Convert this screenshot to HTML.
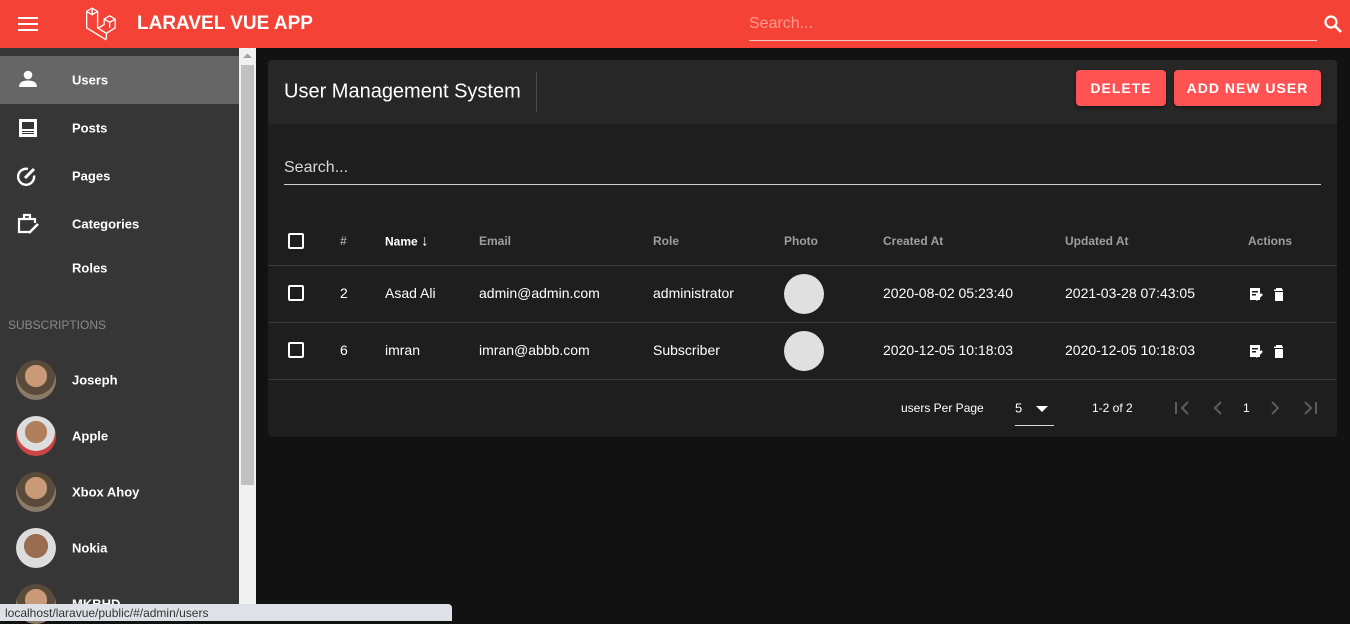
<!DOCTYPE html>
<html><head><meta charset="utf-8"><style>
*{margin:0;padding:0;box-sizing:border-box}
body{width:1350px;height:621px;overflow:hidden;background:#121212;font-family:"Liberation Sans",Arial,sans-serif;color:#fff;position:relative}
.abs{position:absolute}
.top{left:0;top:0;width:1350px;height:48px;background:#f44336}
.side{left:0;top:48px;width:239px;height:573px;background:#363636}
.sb{left:239px;top:48px;width:17px;height:573px;background:#f1f1f1}
.thumb{left:241px;top:65px;width:13px;height:420px;background:#c1c1c1}
.nav{position:absolute;left:72px;font-size:13px;font-weight:bold;transform:translateY(-50%)}
.av{position:absolute;left:16px;width:40px;height:40px;border-radius:50%;background:radial-gradient(circle at 50% 40%,#c89a78 0 35%,#5a4a3a 36% 60%,#8a7a66 61%)}
.card{left:268px;top:60px;width:1069px;height:377px;background:#1e1e1e;border-radius:4px;overflow:hidden}
.t{position:absolute;font-size:14px;transform:translateY(-50%);white-space:nowrap}
.h{position:absolute;font-size:12px;font-weight:bold;color:#9e9e9e;transform:translateY(-50%)}
.cb{position:absolute;width:16px;height:16px;border:2px solid #fff;border-radius:2px}
.line{position:absolute;left:0;width:1069px;height:1px;background:#3a3a3a}
.ph{position:absolute;width:40px;height:40px;border-radius:50%;background:#e0e0e0}
.btn{position:absolute;top:10px;height:36px;background:#ff5252;border-radius:4px;font-size:14px;font-weight:bold;letter-spacing:1px;display:flex;align-items:center;justify-content:center;box-shadow:0 2px 3px rgba(0,0,0,.4)}
</style></head><body>
<div class="abs top">
 <svg class="abs" style="left:18px;top:17px" width="20" height="14"><rect y="0" width="20" height="2" fill="#fff"/><rect y="6" width="20" height="2" fill="#fff"/><rect y="12" width="20" height="2" fill="#fff"/></svg>
 <svg class="abs" style="left:85px;top:7px" width="34" height="34" viewBox="1 1 30 31" fill="none" stroke="#fff" stroke-width="1.2"><path d="M2 5l5-3 5 3v15l8 5 8-5v-8l-5-3-5 3v5l-6 3.5M2 5v15l18 11M7 8V2M12 5l-5 3-5-3M20 30v-5M28 12l-5 3-5-3M23 15v5"/></svg>
 <div class="abs" style="left:137px;top:13px;font-size:19px;font-weight:bold">LARAVEL VUE APP</div>
 <div class="abs" style="left:749px;top:15px;font-size:16px;color:#ff9a90">Search...</div>
 <div class="abs" style="left:749px;top:40px;width:568px;height:1px;background:#f0c8c4"></div>
 <svg class="abs" style="left:1323px;top:14px" width="20" height="20" viewBox="0 0 20 20"><circle cx="8" cy="8" r="5.5" stroke="#fff" stroke-width="2.2" fill="none"/><path d="M12 12l6 6" stroke="#fff" stroke-width="2.6"/></svg>
</div>
<div class="abs side">
 <div class="abs" style="left:0;top:8px;width:239px;height:48px;background:#666"></div>
</div>
<svg class="abs" style="left:18px;top:70px" width="20" height="18" viewBox="0 0 20 18"><circle cx="10" cy="5" r="4.3" fill="#fff"/><path d="M1 17c0-5 4-6.5 9-6.5s9 1.5 9 6.5z" fill="#fff"/></svg>
<div class="nav" style="top:80px">Users</div>
<svg class="abs" style="left:19px;top:119px" width="18" height="18"><rect width="18" height="18" fill="#fff"/><rect x="3" y="3" width="12" height="7" fill="#363636"/><rect x="3" y="12" width="12" height="1" fill="#363636"/><rect x="3" y="14" width="12" height="1" fill="#363636"/></svg>
<div class="nav" style="top:128px">Posts</div>
<svg class="abs" style="left:17px;top:166px" width="22" height="22" viewBox="0 0 22 22" fill="none" stroke="#fff" stroke-width="2.4"><path d="M17 9.5A8 8 0 1 1 11 3"/><path d="M8 12l9-9" stroke-width="3"/></svg>
<div class="nav" style="top:176px">Pages</div>
<svg class="abs" style="left:17px;top:213px" width="24" height="22" viewBox="0 0 24 22" fill="none" stroke="#fff" stroke-width="2.2"><path d="M13 19H2V6h16v4M7 6V2h6v4"/><path d="M12 20l9-9" stroke-width="2.6"/></svg>
<div class="nav" style="top:224px">Categories</div>
<div class="nav" style="top:268px">Roles</div>
<div class="abs" style="left:8px;top:318px;font-size:12px;color:#8a8a8a">SUBSCRIPTIONS</div>
<div class="av" style="top:360px"></div><div class="nav" style="top:380px">Joseph</div>
<div class="av" style="top:416px;background:radial-gradient(circle at 50% 40%,#b0805c 0 35%,#ddd 36% 60%,#c44 61%)"></div><div class="nav" style="top:436px">Apple</div>
<div class="av" style="top:472px"></div><div class="nav" style="top:492px">Xbox Ahoy</div>
<div class="av" style="top:528px;background:radial-gradient(circle at 50% 45%,#9a6c50 0 40%,#ddd 41%)"></div><div class="nav" style="top:548px">Nokia</div>
<div class="av" style="top:584px"></div><div class="nav" style="top:604px">MKBHD</div>
<div class="abs sb"></div><div class="abs thumb"></div>
<svg class="abs" style="left:242px;top:52px" width="11" height="8"><path d="M1 6l4.5-4.5L10 6z" fill="#a0a0a0"/></svg>

<div class="abs card">
 <div class="abs" style="left:0;top:0;width:1069px;height:64px;background:#272727"></div>
 <div class="t" style="left:16px;top:32px;font-size:20px">User Management System</div>
 <div class="abs" style="left:268px;top:12px;width:1px;height:40px;background:#4a4a4a"></div>
 <div class="btn" style="left:808px;width:90px">DELETE</div>
 <div class="btn" style="left:906px;width:147px">ADD NEW USER</div>
 <div class="t" style="left:16px;top:108px;font-size:16px;color:#d8d8d8">Search...</div>
 <div class="abs" style="left:16px;top:124px;width:1037px;height:1px;background:#d0d0d0"></div>

 <div class="cb" style="left:20px;top:173px"></div>
 <div class="h" style="left:72px;top:181px">#</div>
 <div class="h" style="left:117px;top:181px;color:#fff">Name <span style="font-size:15px">↓</span></div>
 <div class="h" style="left:211px;top:181px">Email</div>
 <div class="h" style="left:385px;top:181px">Role</div>
 <div class="h" style="left:516px;top:181px">Photo</div>
 <div class="h" style="left:615px;top:181px">Created At</div>
 <div class="h" style="left:797px;top:181px">Updated At</div>
 <div class="h" style="left:980px;top:181px">Actions</div>
 <div class="line" style="top:205px"></div>

 <div class="cb" style="left:20px;top:225px"></div>
 <div class="t" style="left:72px;top:233px">2</div>
 <div class="t" style="left:117px;top:233px">Asad Ali</div>
 <div class="t" style="left:211px;top:233px">admin@admin.com</div>
 <div class="t" style="left:385px;top:233px">administrator</div>
 <div class="ph" style="left:516px;top:214px"></div>
 <div class="t" style="left:615px;top:233px">2020-08-02 05:23:40</div>
 <div class="t" style="left:797px;top:233px">2021-03-28 07:43:05</div>
 <div class="line" style="top:262px"></div>

 <div class="cb" style="left:20px;top:282px"></div>
 <div class="t" style="left:72px;top:290px">6</div>
 <div class="t" style="left:117px;top:290px">imran</div>
 <div class="t" style="left:211px;top:290px">imran@abbb.com</div>
 <div class="t" style="left:385px;top:290px">Subscriber</div>
 <div class="ph" style="left:516px;top:271px"></div>
 <div class="t" style="left:615px;top:290px">2020-12-05 10:18:03</div>
 <div class="t" style="left:797px;top:290px">2020-12-05 10:18:03</div>
 <div class="line" style="top:319px"></div>

 <svg class="abs" style="left:981px;top:227px" width="34" height="14"><rect x="1" y="1" width="10" height="12" fill="#fff"/><rect x="3" y="4" width="6" height="1.5" fill="#1e1e1e"/><rect x="3" y="7" width="4" height="1.5" fill="#1e1e1e"/><path d="M7 13l6-6" stroke="#fff" stroke-width="2.5"/><rect x="27" y="1" width="6" height="1.6" fill="#fff"/><rect x="25" y="2.5" width="10" height="1.5" fill="#fff"/><rect x="26" y="5" width="8" height="9" fill="#fff"/></svg>
 <svg class="abs" style="left:981px;top:284px" width="34" height="14"><rect x="1" y="1" width="10" height="12" fill="#fff"/><rect x="3" y="4" width="6" height="1.5" fill="#1e1e1e"/><rect x="3" y="7" width="4" height="1.5" fill="#1e1e1e"/><path d="M7 13l6-6" stroke="#fff" stroke-width="2.5"/><rect x="27" y="1" width="6" height="1.6" fill="#fff"/><rect x="25" y="2.5" width="10" height="1.5" fill="#fff"/><rect x="26" y="5" width="8" height="9" fill="#fff"/></svg>

 <div class="t" style="left:633px;top:348px;font-size:12px">users Per Page</div>
 <div class="t" style="left:747px;top:348px;font-size:13px">5</div>
 <svg class="abs" style="left:768px;top:346px" width="12" height="6"><path d="M0 0h12L6 6z" fill="#fff"/></svg>
 <div class="abs" style="left:747px;top:365px;width:39px;height:1px;background:#ddd"></div>
 <div class="t" style="left:824px;top:348px;font-size:12px">1-2 of 2</div>
 <svg class="abs" style="left:906px;top:341px" width="150" height="14" fill="none" stroke="#5c5c5c" stroke-width="2"><path d="M2 1v12M14 1L8 7l6 6M47 1l-6 6 6 6M98 1l6 6-6 6M131 1l6 6-6 6M142 1v12"/></svg>
 <div class="t" style="left:975px;top:348px;font-size:12px">1</div>
</div>
<div class="abs" style="left:0;top:604px;width:452px;height:17px;background:#dee1e6;border-top-right-radius:4px"></div>
<div class="abs" style="left:5px;top:606px;font-size:12px;color:#333">localhost/laravue/public/#/admin/users</div>
</body></html>
